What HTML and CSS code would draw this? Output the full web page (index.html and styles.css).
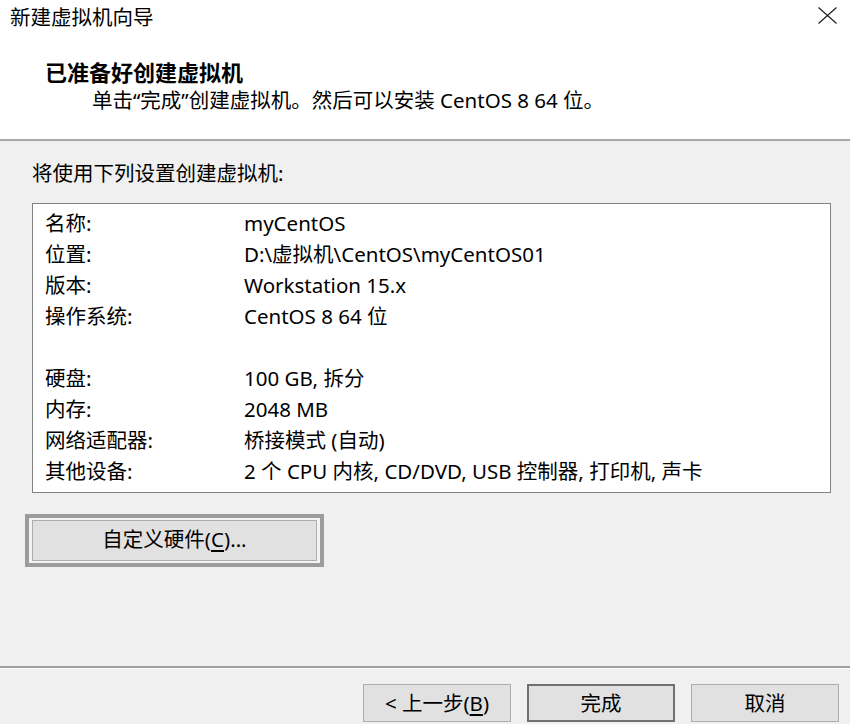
FILE: index.html
```html
<!DOCTYPE html>
<html lang="zh-CN">
<head>
<meta charset="utf-8">
<title>新建虚拟机向导</title>
<link rel="stylesheet" href="styles.css">
</head>
<body>
<div class="dialog">
  <header class="header">
    <div class="titlebar">
      <span class="title">新建虚拟机向导</span>
      <svg class="close" width="19" height="17" viewBox="0 0 19 17" aria-hidden="true">
        <line x1="0.5" y1="0.5" x2="18.5" y2="16.5" />
        <line x1="18.5" y1="0.5" x2="0.5" y2="16.5" />
      </svg>
    </div>
    <div class="heading">已准备好创建虚拟机</div>
    <div class="subtitle">单击“完成”创建虚拟机。然后可以安装 CentOS 8 64 位。</div>
  </header>
  <main class="content">
    <p class="intro">将使用下列设置创建虚拟机:</p>
    <div class="summary">
      <div class="grid">
        <span>名称:</span><span>myCentOS</span>
        <span>位置:</span><span>D:\虚拟机\CentOS\myCentOS01</span>
        <span>版本:</span><span>Workstation 15.x</span>
        <span>操作系统:</span><span>CentOS 8 64 位</span>
        <span class="blank"></span>
        <span>硬盘:</span><span>100 GB, 拆分</span>
        <span>内存:</span><span>2048 MB</span>
        <span>网络适配器:</span><span>桥接模式 (自动)</span>
        <span>其他设备:</span><span>2 个 CPU 内核, CD/DVD, USB 控制器, 打印机, 声卡</span>
      </div>
    </div>
    <button class="custom"><span class="custom-inner">自定义硬件(<u>C</u>)...</span></button>
  </main>
  <footer class="footer">
    <button class="btn">&lt; 上一步(<u>B</u>)</button>
    <button class="btn default">完成</button>
    <button class="btn">取消</button>
  </footer>
</div>
</body>
</html>
```

FILE: styles.css
```css
* {
  box-sizing: border-box;
}

html, body {
  margin: 0;
  padding: 0;
  background: #f0f0f0;
}

.dialog {
  width: 850px;
  height: 724px;
  display: flex;
  flex-direction: column;
  overflow: hidden;
  background: #f0f0f0;
  color: #000;
  font-family: "Noto Sans", "Noto Sans CJK SC", sans-serif;
  font-size: 20.5px;
}

.header {
  background: #fff;
  height: 141px;
  border-bottom: 2px solid #a8a8a8;
  flex: none;
}

.titlebar {
  height: 34px;
  display: flex;
  align-items: center;
  justify-content: space-between;
  padding: 0 13px 0 10px;
  line-height: 34px;
}

.close {
  margin-top: -4px;
  stroke: #1a1a1a;
  stroke-width: 1.2;
}

.heading {
  margin: 24px 0 0 45px;
  font-size: 22px;
  font-weight: bold;
  line-height: 28px;
}

.subtitle {
  margin-left: 92px;
  line-height: 28px;
}

.content {
  flex: 1;
  padding: 18px 19px 0 25px;
}

.intro {
  margin: 0 0 16px 7px;
  line-height: 28px;
}

.summary {
  margin-left: 7px;
  height: 290px;
  border: 1px solid #828282;
  background: #fff;
  padding: 4px 12px 0;
}

.grid {
  display: grid;
  grid-template-columns: 199px 1fr;
  line-height: 31px;
}

.grid span {
  white-space: nowrap;
}

.grid .blank {
  grid-column: 1 / -1;
  height: 31px;
}

.custom {
  display: block;
  margin-top: 21px;
  width: 299px;
  height: 53px;
  padding: 2px 3px;
  border: 4px solid #9c9c9c;
  background: #f3f3f3;
  font: inherit;
  color: inherit;
}

.custom-inner {
  display: block;
  height: 100%;
  border: 1px solid #adadad;
  background: #e1e1e1;
  line-height: 37px;
  text-align: center;
}

.footer {
  flex: none;
  height: 58px;
  border-top: 2px solid #a0a0a0;
  box-shadow: inset 0 1px 0 #fff;
  padding: 16px 11px 0 0;
  display: flex;
  justify-content: flex-end;
  align-items: flex-start;
  gap: 16px;
}

.btn {
  width: 148px;
  height: 38px;
  border: 1px solid #adadad;
  background: #e1e1e1;
  font: inherit;
  color: inherit;
  padding: 0;
  line-height: 34px;
}

.btn.default {
  border: 2px solid #707070;
}

u {
  text-decoration: underline;
  text-underline-offset: 3px;
}
```
